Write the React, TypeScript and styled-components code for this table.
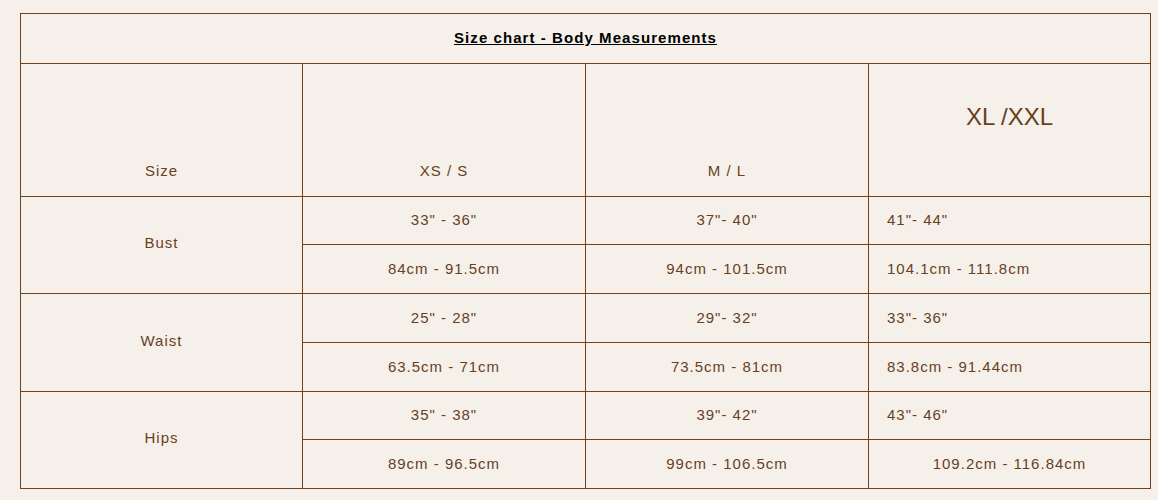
import React from "react";
import styled, { createGlobalStyle } from "styled-components";

const Global = createGlobalStyle`
  html, body {
    margin: 0;
    padding: 0;
    background: #f5f1ea;
  }
  body {
    font-family: "Liberation Sans", Arial, sans-serif;
  }
`;

const Page = styled.div`
  padding: 13px 8px 0 20px;
  background: #f5f1ea;
  min-height: 500px;
  box-sizing: border-box;
`;

const Table = styled.table`
  width: 1131px;
  border-collapse: collapse;
  table-layout: fixed;
  color: #6a3f1f;
  font-size: 15px;
  letter-spacing: 1px;
`;

const Cell = styled.td<{ $align?: "left" | "center"; $h?: number; $label?: boolean }>`
  border: 1px solid #74401e;
  padding: 0 0 ${(p) => (p.$label ? "5px" : "2px")} ${(p) => (p.$align === "left" ? "18px" : "0")};
  text-align: ${(p) => p.$align ?? "center"};
  vertical-align: middle;
  height: ${(p) => (p.$h ? `${p.$h}px` : "auto")};
  box-sizing: border-box;
`;

const TitleCell = styled.td`
  border: 1px solid #74401e;
  height: 50px;
  padding: 0 0 2px 0;
  text-align: center;
  vertical-align: middle;
  box-sizing: border-box;
`;

const Title = styled.span`
  color: #000;
  font-weight: bold;
  text-decoration: underline;
  font-size: 15px;
  letter-spacing: 1.07px;
`;

const HeadCell = styled.td<{ $big?: boolean }>`
  border: 1px solid #74401e;
  height: 133px;
  box-sizing: border-box;
  text-align: center;
  vertical-align: ${(p) => (p.$big ? "top" : "bottom")};
  padding: ${(p) => (p.$big ? "39px 0 0 0" : "0 0 17px 0")};
  font-size: ${(p) => (p.$big ? "24px" : "15px")};
  letter-spacing: ${(p) => (p.$big ? "0" : "1px")};
`;

type Sub = { text: string; align?: "left" | "center" };
type Group = { label: string; rows: [Sub[], Sub[]]; heights: [number, number] };

const groups: Group[] = [
  {
    label: "Bust",
    heights: [48, 49],
    rows: [
      [{ text: '33" - 36"' }, { text: '37"- 40"' }, { text: '41"- 44"', align: "left" }],
      [{ text: "84cm - 91.5cm" }, { text: "94cm - 101.5cm" }, { text: "104.1cm - 111.8cm", align: "left" }],
    ],
  },
  {
    label: "Waist",
    heights: [49, 49],
    rows: [
      [{ text: '25" - 28"' }, { text: '29"- 32"' }, { text: '33"- 36"', align: "left" }],
      [{ text: "63.5cm - 71cm" }, { text: "73.5cm - 81cm" }, { text: "83.8cm - 91.44cm", align: "left" }],
    ],
  },
  {
    label: "Hips",
    heights: [48, 49],
    rows: [
      [{ text: '35" - 38"' }, { text: '39"- 42"' }, { text: '43"- 46"', align: "left" }],
      [{ text: "89cm - 96.5cm" }, { text: "99cm - 106.5cm" }, { text: "109.2cm - 116.84cm" }],
    ],
  },
];

export default function App() {
  return (
    <>
      <Global />
      <Page>
        <Table>
          <colgroup>
            <col style={{ width: 282 }} />
            <col style={{ width: 283 }} />
            <col style={{ width: 283 }} />
            <col style={{ width: 282 }} />
          </colgroup>
          <tbody>
            <tr>
              <TitleCell colSpan={4}>
                <Title>Size chart - Body Measurements</Title>
              </TitleCell>
            </tr>
            <tr>
              <HeadCell>Size</HeadCell>
              <HeadCell>XS / S</HeadCell>
              <HeadCell>M / L</HeadCell>
              <HeadCell $big>XL /XXL</HeadCell>
            </tr>
            {groups.map((g) => (
              <React.Fragment key={g.label}>
                <tr>
                  <Cell rowSpan={2} $label>
                    {g.label}
                  </Cell>
                  {g.rows[0].map((c, i) => (
                    <Cell key={i} $align={c.align} $h={g.heights[0]}>
                      {c.text}
                    </Cell>
                  ))}
                </tr>
                <tr>
                  {g.rows[1].map((c, i) => (
                    <Cell key={i} $align={c.align} $h={g.heights[1]}>
                      {c.text}
                    </Cell>
                  ))}
                </tr>
              </React.Fragment>
            ))}
          </tbody>
        </Table>
      </Page>
    </>
  );
}
